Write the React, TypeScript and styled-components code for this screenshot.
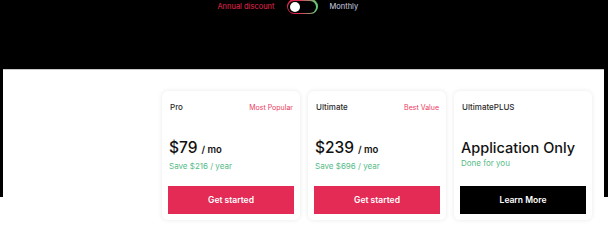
import styled, { createGlobalStyle } from "styled-components";

const Global = createGlobalStyle`
  html, body {
    margin: 0;
    padding: 0;
    background: #ffffff;
  }
  body {
    font-family: Inter, "Liberation Sans", Arial, sans-serif;
    -webkit-font-smoothing: antialiased;
  }
`;

const Page = styled.section`
  min-height: 224px;
  background: linear-gradient(#000, #000) no-repeat top left / 100% 197px, #fff;
  padding: 0 4px 0 3px;
  box-sizing: border-box;
`;

const BillingRow = styled.div`
  height: 69px;
  display: grid;
  grid-template-columns: 1fr auto 1fr;
  align-items: start;
  column-gap: 12px;
  padding-right: 3px;
`;

const BillingLabel = styled.span<{ $side: "left" | "right" }>`
  font-size: 7.5px;
  line-height: 13px;
  color: ${(p) => (p.$side === "left" ? "#e8264f" : "#cfd6e6")};
  justify-self: ${(p) => (p.$side === "left" ? "end" : "start")};
`;

const Toggle = styled.div`
  width: 31px;
  height: 15px;
  margin-top: -1px;
  border-radius: 999px;
  padding: 1.5px;
  box-sizing: border-box;
  background: linear-gradient(90deg, #e8264f 0%, #e8264f 35%, #5fd37a 100%);
  display: flex;
`;

const ToggleTrack = styled.div`
  flex: 1;
  border-radius: 999px;
  background: #000;
  display: flex;
  align-items: center;
  padding: 0 1.5px;
`;

const Knob = styled.div`
  width: 10px;
  height: 10px;
  border-radius: 50%;
  background: #fff;
`;

const Panel = styled.div`
  background: #fff;
  border-top: 1px solid #c8c8c8;
  padding: 21px 0 10px 159px;
`;

const Cards = styled.div`
  display: grid;
  grid-template-columns: repeat(3, 138px);
  column-gap: 8px;
`;

const Card = styled.div`
  height: 129px;
  box-sizing: border-box;
  background: #fff;
  border-radius: 6px;
  box-shadow: 0 0 5px rgba(0, 0, 0, 0.09);
  padding: 10px 6px 6px;
  display: flex;
  flex-direction: column;
`;

const CardHead = styled.div`
  display: flex;
  justify-content: space-between;
  align-items: center;
  padding: 0 1px 0 2px;
  height: 12px;
`;

const PlanName = styled.span`
  font-size: 8px;
  font-weight: 500;
  color: #2b2b2b;
`;

const Tag = styled.span`
  font-size: 7px;
  color: #ec3a61;
`;

const PriceBlock = styled.div`
  margin-top: 25px;
  padding-left: 1px;
`;

const Price = styled.div`
  font-size: 15.5px;
  font-weight: 500;
  line-height: 20px;
  color: #111;

  small {
    font-size: 9.5px;
    font-weight: 600;
    margin-left: 4px;
  }
`;

const Headline = styled.div`
  font-size: 14.5px;
  font-weight: 500;
  line-height: 19px;
  color: #111;
`;

const Note = styled.div`
  font-size: 8px;
  line-height: 12px;
  color: #55bb88;
`;

const CTA = styled.button<{ $dark?: boolean }>`
  margin-top: auto;
  height: 28px;
  width: 100%;
  border: none;
  border-radius: 0;
  background: ${(p) => (p.$dark ? "#000" : "#e32b55")};
  color: #fff;
  font-family: inherit;
  font-size: 8.5px;
  font-weight: 600;
  cursor: pointer;
`;

export default function App() {
  return (
    <>
      <Global />
      <Page>
        <BillingRow>
          <BillingLabel $side="left">Annual discount</BillingLabel>
          <Toggle>
            <ToggleTrack>
              <Knob />
            </ToggleTrack>
          </Toggle>
          <BillingLabel $side="right">Monthly</BillingLabel>
        </BillingRow>
        <Panel>
          <Cards>
            <Card>
              <CardHead>
                <PlanName>Pro</PlanName>
                <Tag>Most Popular</Tag>
              </CardHead>
              <PriceBlock>
                <Price>
                  $79<small>/ mo</small>
                </Price>
                <Note>Save $216 / year</Note>
              </PriceBlock>
              <CTA>Get started</CTA>
            </Card>
            <Card>
              <CardHead>
                <PlanName>Ultimate</PlanName>
                <Tag>Best Value</Tag>
              </CardHead>
              <PriceBlock>
                <Price>
                  $239<small>/ mo</small>
                </Price>
                <Note>Save $696 / year</Note>
              </PriceBlock>
              <CTA>Get started</CTA>
            </Card>
            <Card>
              <CardHead>
                <PlanName>UltimatePLUS</PlanName>
              </CardHead>
              <PriceBlock>
                <Headline>Application Only</Headline>
                <Note>Done for you</Note>
              </PriceBlock>
              <CTA $dark>Learn More</CTA>
            </Card>
          </Cards>
        </Panel>
      </Page>
    </>
  );
}
